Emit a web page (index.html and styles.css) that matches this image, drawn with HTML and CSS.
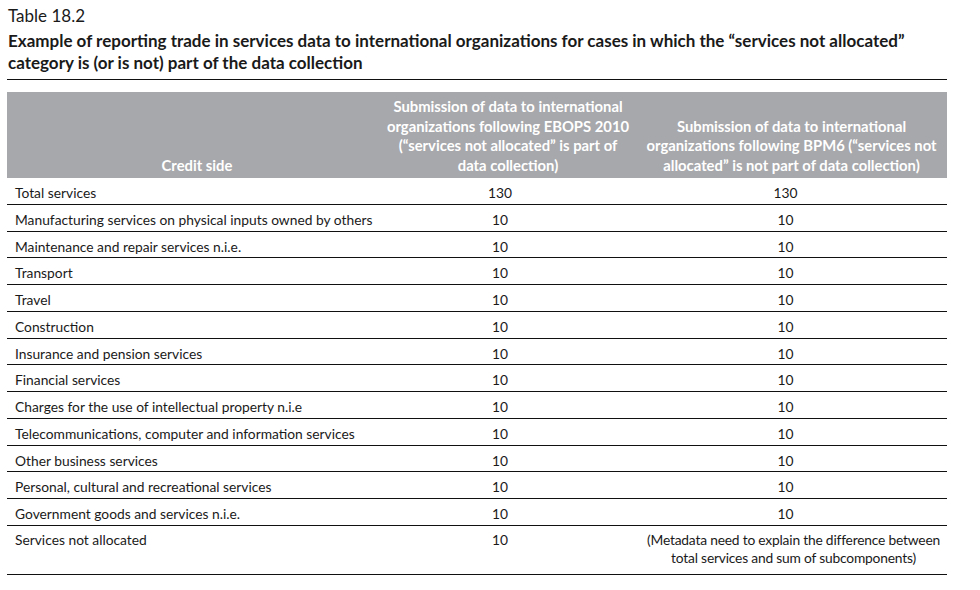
FILE: index.html
```html
<!DOCTYPE html>
<html lang="en">
<head>
<meta charset="utf-8">
<title>Table 18.2</title>
<link rel="stylesheet" href="styles.css">
</head>
<body>
<div class="page">
  <div class="label">Table 18.2</div>
  <h1 class="title">Example of reporting trade in services data to international organizations for cases in which the “services not allocated”<br>category is (or is not) part of the data collection</h1>
  <div class="rule"></div>
  <table class="data">
    <colgroup>
      <col class="c1"><col class="c2"><col class="c3">
    </colgroup>
    <thead>
      <tr>
        <th class="h1">Credit side</th>
        <th class="h2">Submission of data to international<br>organizations following EBOPS 2010<br>(“services not allocated” is part of<br>data collection)</th>
        <th class="h3">Submission of data to international<br>organizations following BPM6 (“services not<br>allocated” is not part of data collection)</th>
      </tr>
    </thead>
    <tbody>
      <tr><td>Total services</td><td class="n2">130</td><td class="n3">130</td></tr>
      <tr><td>Manufacturing services on physical inputs owned by others</td><td class="n2">10</td><td class="n3">10</td></tr>
      <tr><td>Maintenance and repair services n.i.e.</td><td class="n2">10</td><td class="n3">10</td></tr>
      <tr><td>Transport</td><td class="n2">10</td><td class="n3">10</td></tr>
      <tr><td>Travel</td><td class="n2">10</td><td class="n3">10</td></tr>
      <tr><td>Construction</td><td class="n2">10</td><td class="n3">10</td></tr>
      <tr><td>Insurance and pension services</td><td class="n2">10</td><td class="n3">10</td></tr>
      <tr><td>Financial services</td><td class="n2">10</td><td class="n3">10</td></tr>
      <tr><td>Charges for the use of intellectual property n.i.e</td><td class="n2">10</td><td class="n3">10</td></tr>
      <tr><td>Telecommunications, computer and information services</td><td class="n2">10</td><td class="n3">10</td></tr>
      <tr><td>Other business services</td><td class="n2">10</td><td class="n3">10</td></tr>
      <tr><td>Personal, cultural and recreational services</td><td class="n2">10</td><td class="n3">10</td></tr>
      <tr><td>Government goods and services n.i.e.</td><td class="n2">10</td><td class="n3">10</td></tr>
      <tr class="last"><td>Services not allocated</td><td class="n2">10</td><td class="note">(Metadata need to explain the difference between<br>total services and sum of subcomponents)</td></tr>
    </tbody>
  </table>
</div>
</body>
</html>
```
FILE: styles.css
```css
html, body {
  margin: 0;
  padding: 0;
  background: #ffffff;
}

.page {
  padding: 5px 0 0 7px;
  width: 940px;
  font-family: Lato, "Open Sans", sans-serif;
  color: #1a1a1a;
}

.label {
  font-size: 17px;
  line-height: 22px;
  padding-left: 1px;
}

.title {
  margin: 3px 0 0 0;
  padding-left: 1px;
  font-size: 17px;
  line-height: 22px;
  font-weight: 700;
  color: #1a1a1a;
}

.rule {
  margin-top: 5px;
  height: 1px;
  background: #111;
}

.data {
  margin-top: 12px;
  width: 940px;
  border-collapse: collapse;
  table-layout: fixed;
  font-size: 13.8px;
}

.c1 { width: 373px; }
.c2 { width: 256px; }
.c3 { width: 311px; }

.data th {
  background: #a7a8ab;
  color: #ffffff;
  font-size: 14.8px;
  font-weight: 700;
  line-height: 19.5px;
  vertical-align: bottom;
  text-align: center;
  white-space: nowrap;
  padding: 5px 0 3px;
}

.data th.h1 {
  padding-left: 8px;
  padding-right: 1px;
}

.data td {
  line-height: 17.75px;
  padding: 6px 8px 2px;
  border-bottom: 1px solid #111;
  vertical-align: top;
  white-space: nowrap;
}

.data td.n2 {
  text-align: center;
  padding-right: 24px;
}

.data td.n3 {
  text-align: center;
  padding-right: 20px;
}

.data td.note {
  text-align: center;
  padding-left: 4px;
  padding-right: 0;
  letter-spacing: -0.2px;
}

.data tr.last td {
  line-height: 18px;
  padding-top: 5px;
  padding-bottom: 7px;
}
```
